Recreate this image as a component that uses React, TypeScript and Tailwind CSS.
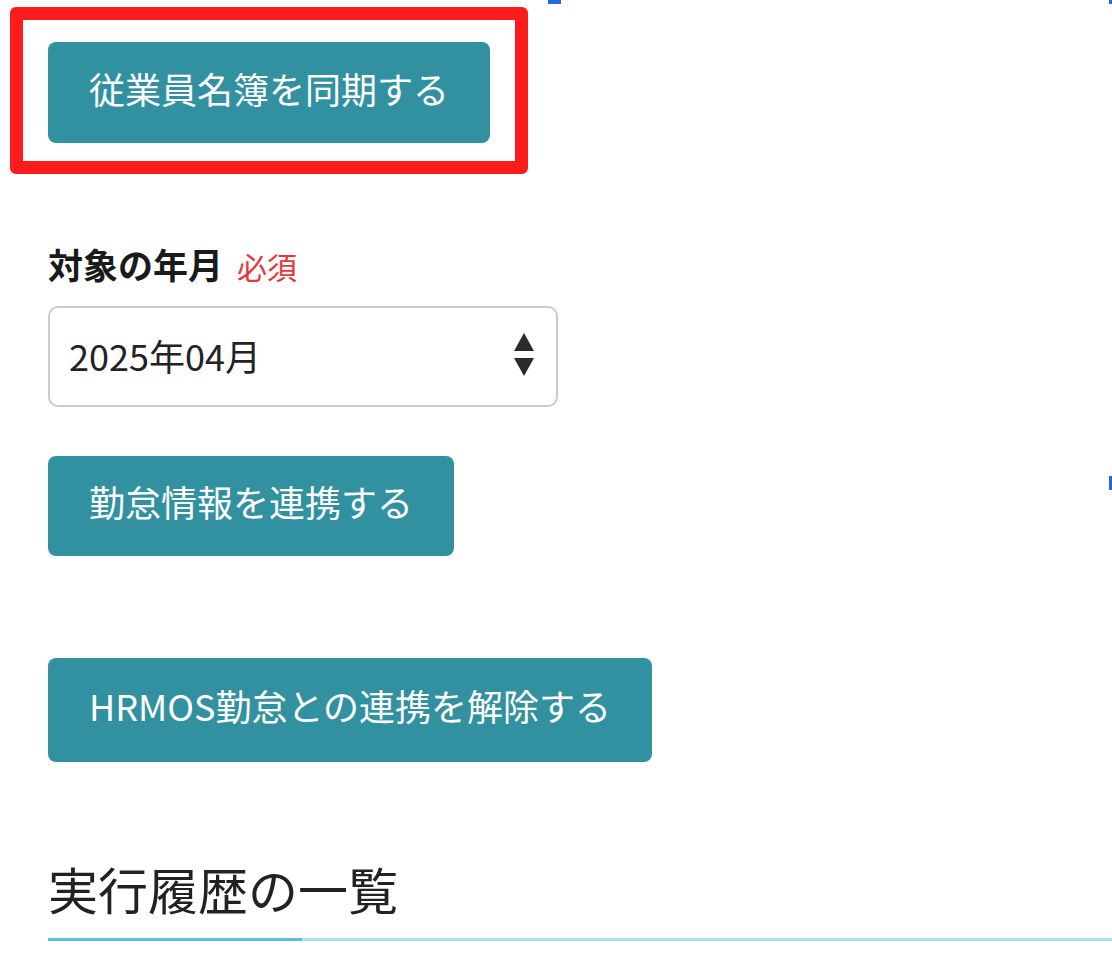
import React from "react";

const font = { fontFamily: '"Noto Sans CJK JP", "Noto Sans", sans-serif' };

function TealButton({ children, className }: { children: React.ReactNode; className?: string }) {
  return (
    <button
      type="button"
      className={
        "flex items-center rounded-[8px] bg-[#3291a0] px-[41px] pb-[10px] text-[36px] leading-none text-white " +
        (className ?? "")
      }
    >
      {children}
    </button>
  );
}

export default function App() {
  return (
    <div className="relative min-h-[958px] w-full overflow-hidden bg-white" style={font}>
      {/* annotation overlays */}
      <div className="absolute left-[10px] top-[7px] h-[167px] w-[518px] rounded-[6px] border-[13px] border-[#fc1c1c]" />
      <div className="absolute left-[548px] top-0 h-[4px] w-[13px] bg-[#2268e0]" />
      <div className="absolute right-0 top-0 h-[4px] w-[3px] bg-[#2268e0]" />
      <div className="absolute right-0 top-[476px] h-[14px] w-[3px] bg-[#2268e0]" />

      <div className="flex flex-col pl-[48px] pt-[42px]">
        <div className="flex">
          <TealButton className="h-[101px]">従業員名簿を同期する</TealButton>
        </div>

        <div className="mt-[96px] flex h-[50px] items-baseline gap-[14px] leading-[50px]">
          <span className="text-[35px] font-bold text-[#1a1a1a]">対象の年月</span>
          <span className="text-[30px] text-[#e5383b]">必須</span>
        </div>

        <div className="mt-[17px] flex h-[101px] w-[510px] items-center justify-between rounded-[10px] border-2 border-[#cbcbcb] pb-[4px] pl-[19px] pr-[22px]">
          <span className="text-[36px] text-[#222]">2025年04月</span>
          <svg width="20" height="44" viewBox="0 0 20 44">
            <path d="M10 0 L20 18 L0 18 Z" fill="#2b2b2b" />
            <path d="M0 25 L20 25 L10 43 Z" fill="#2b2b2b" />
          </svg>
        </div>

        <div className="mt-[49px] flex">
          <TealButton className="h-[100px]">勤怠情報を連携する</TealButton>
        </div>

        <div className="mt-[102px] flex">
          <TealButton className="h-[104px]">HRMOS勤怠との連携を解除する</TealButton>
        </div>

        <div className="mt-[91px] h-[70px] text-[50px] leading-[70px] text-[#222]">実行履歴の一覧</div>

        <div className="mt-[15px] flex h-[3px]">
          <div className="w-[254px] bg-[#5cbfd4]" />
          <div className="flex-1 bg-[#a8e2ee]" />
        </div>
      </div>
    </div>
  );
}
